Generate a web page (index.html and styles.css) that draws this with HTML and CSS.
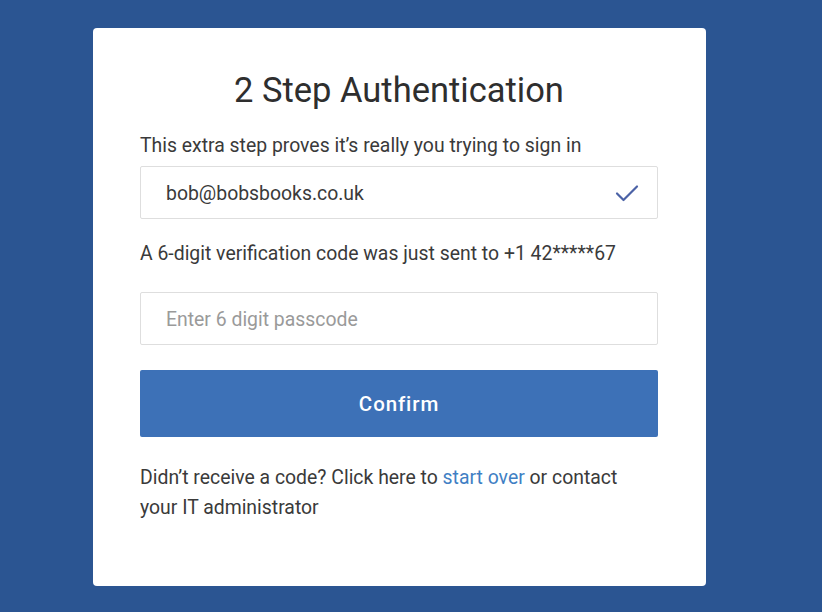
FILE: index.html
```html
<!DOCTYPE html>
<html lang="en">
<head>
<meta charset="utf-8">
<title>2 Step Authentication</title>
<link rel="stylesheet" href="styles.css">
</head>
<body>
<main class="page">
  <section class="card">
    <h1 class="title">2 Step Authentication</h1>
    <p class="lead">This extra step proves it’s really you trying to sign in</p>
    <div class="field field-email">
      <span class="field-value">bob@bobsbooks.co.uk</span>
      <svg class="check" width="24" height="18" viewBox="0 0 24 18" aria-hidden="true">
        <path d="M2 9.5 L8.5 16 L22 2.5" fill="none" stroke="#4b62a6" stroke-width="2.2" stroke-linecap="round" stroke-linejoin="round"/>
      </svg>
    </div>
    <p class="info">A 6-digit verification code was just sent to +1 42*****67</p>
    <div class="field field-code">
      <span class="placeholder">Enter 6 digit passcode</span>
    </div>
    <button class="confirm" type="button">Confirm</button>
    <p class="help">Didn’t receive a code? Click here to <a href="#" class="link">start over</a> or contact your IT administrator</p>
  </section>
</main>
</body>
</html>
```

FILE: styles.css
```css
html, body {
  margin: 0;
  padding: 0;
  background: #2b5592;
  font-family: Roboto, "Liberation Sans", sans-serif;
  color: #3a3a3a;
}
.page {
  padding: 28px 0 0 93px;
  min-height: 612px;
  box-sizing: border-box;
}
.card {
  width: 613px;
  height: 558px;
  box-sizing: border-box;
  background: #fff;
  border-radius: 4px;
  padding: 42px 48px 0 47px;
  display: flex;
  flex-direction: column;
}
.title {
  margin: 0;
  font-size: 34.5px;
  font-weight: 400;
  line-height: 40px;
  text-align: center;
  color: #2e2e2e;
}
.lead {
  margin: 24px 0 0;
  font-size: 19.4px;
  line-height: 24px;
  color: #3a3a3a;
}
.field {
  height: 53px;
  box-sizing: border-box;
  border: 1px solid #dedede;
  border-radius: 2px;
  padding: 2px 18px 0 25px;
  display: flex;
  align-items: center;
  justify-content: space-between;
  font-size: 19.4px;
}
.field-email { margin-top: 8px; }
.field-value { color: #3a3a3a; }
.placeholder { color: #9a9a9a; }
.check { display: block; margin-top: -2px; }
.info {
  margin: 23px 0 0;
  font-size: 19.4px;
  line-height: 24px;
  color: #3a3a3a;
}
.field-code { margin-top: 26px; }
.confirm {
  margin-top: 25px;
  height: 67px;
  padding-top: 2px;
  border: none;
  border-radius: 2px;
  background: #3d71b7;
  color: #fff;
  font-family: Roboto, "Liberation Sans", sans-serif;
  font-size: 20.5px;
  font-weight: 500;
  letter-spacing: 0.9px;
}
.help {
  margin: 26px 0 0;
  font-size: 19.4px;
  line-height: 30px;
  color: #3a3a3a;
}
.link {
  color: #3f7fc4;
  text-decoration: none;
}
```
